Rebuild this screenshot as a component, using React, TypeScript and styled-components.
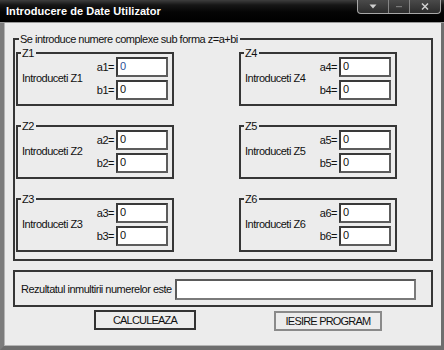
import React from "react";
import styled, { createGlobalStyle } from "styled-components";

const GlobalStyle = createGlobalStyle`
  html, body {
    margin: 0;
    padding: 0;
    background: #ececec;
  }
  body {
    font-family: "Liberation Sans", Arial, sans-serif;
  }
`;

const numbers = [1, 2, 3, 4, 5, 6];

const App: React.FC = () => {
  return (
    <>
      <GlobalStyle />
      <Window>
        <TitleBar>
          <Title>Introducere de Date Utilizator</Title>
          <Controls>
            <ControlCell $wide>
              <svg width="8" height="5" viewBox="0 0 8 5">
                <path d="M0.5 0.5 L7.5 0.5 L4 4.5 Z" fill="#cfcfcf" />
              </svg>
            </ControlCell>
            <ControlCell>
              <svg width="6" height="3" viewBox="0 0 6 3">
                <rect x="0" y="1" width="6" height="1.2" fill="#7a7a7a" />
              </svg>
            </ControlCell>
            <ControlCell $wide>
              <svg width="8" height="7" viewBox="0 0 8 7">
                <path
                  d="M1 0.5 L7 6.5 M7 0.5 L1 6.5"
                  stroke="#cfcfcf"
                  strokeWidth="1.5"
                />
              </svg>
            </ControlCell>
          </Controls>
        </TitleBar>

        <Body>
          <OuterGroup>
            <Caption $indent={4}>
              Se introduce numere complexe sub forma z=a+bi
            </Caption>
            <NumberGrid>
              {numbers.map((n) => (
                <NumberGroup key={n}>
                  <Caption $indent={3}>Z{n}</Caption>
                  <NumberContent>
                    <Prompt>Introduceti Z{n}</Prompt>
                    <Fields>
                      <FieldRow>
                        <FieldLabel>a{n}=</FieldLabel>
                        <Field defaultValue="0" readOnly $active={n === 1} />
                      </FieldRow>
                      <FieldRow>
                        <FieldLabel>b{n}=</FieldLabel>
                        <Field defaultValue="0" readOnly />
                      </FieldRow>
                    </Fields>
                  </NumberContent>
                </NumberGroup>
              ))}
            </NumberGrid>
          </OuterGroup>

          <ResultGroup>
            <Prompt>Rezultatul inmultirii numerelor este</Prompt>
            <ResultField readOnly />
          </ResultGroup>

          <ButtonRow>
            <Button $default $width={102}>
              CALCULEAZA
            </Button>
            <Button $width={108}>IESIRE PROGRAM</Button>
          </ButtonRow>
        </Body>
      </Window>
    </>
  );
};

const Window = styled.div`
  width: 444px;
  height: 350px;
  display: flex;
  flex-direction: column;
  box-sizing: border-box;
  background: #ececec;
`;

const TitleBar = styled.div`
  height: 22px;
  flex-shrink: 0;
  display: flex;
  justify-content: space-between;
  align-items: flex-start;
  background: linear-gradient(#3e3e3e 0px, #161616 5px, #050505 12px, #000 22px);
  border-bottom: 1px solid #9a9a9a;
`;

const Title = styled.div`
  padding: 5px 0 0 6px;
  font-size: 11px;
  line-height: 13px;
  font-weight: 700;
  color: #ffffff;
  letter-spacing: 0.05px;
`;

const Controls = styled.div`
  display: flex;
  height: 13px;
  margin-right: 3px;
  border: 1px solid #a8a8a8;
  border-top: none;
  border-radius: 0 0 4px 4px;
  background: linear-gradient(#4a4a4a, #2c2c2c);
  overflow: hidden;
`;

const ControlCell = styled.div<{ $wide?: boolean }>`
  width: ${({ $wide }) => ($wide ? "30px" : "20px")};
  display: flex;
  align-items: center;
  justify-content: center;
  & + & {
    border-left: 1px solid #858585;
  }
`;

const Body = styled.div`
  flex: 1;
  display: flex;
  flex-direction: column;
  padding: 15px 8px 0 9px;
  border-left: 4px solid #7c7c7c;
  border-right: 3px solid #6e6e6e;
  border-bottom: 4px solid #6e6e6e;
  box-shadow: inset 1px 0 #b4b4b4, inset 0 -1px #b4b4b4;
  font-size: 11px;
  letter-spacing: -0.5px;
  color: #111;
`;

const GroupBox = styled.div`
  display: flex;
  flex-direction: column;
  border: 2px solid #363636;
  box-sizing: border-box;
`;

const OuterGroup = styled(GroupBox)`
  height: 223px;
`;

const Caption = styled.div<{ $indent: number }>`
  width: fit-content;
  height: 12px;
  line-height: 12px;
  margin: -7px 0 -5px ${({ $indent }) => $indent}px;
  padding: 0 2px 0 1px;
  background: #ececec;
  white-space: nowrap;
`;

const NumberGrid = styled.div`
  display: grid;
  grid-template-columns: 158px 158px;
  grid-template-rows: repeat(3, 54px);
  grid-auto-flow: column;
  column-gap: 65px;
  row-gap: 19px;
  padding: 12px 0 7px 1px;
`;

const NumberGroup = styled(GroupBox)``;

const NumberContent = styled.div`
  flex: 1;
  display: flex;
  align-items: center;
  padding: 3px 4px 4px 4px;
`;

const Prompt = styled.div`
  flex: 1;
  white-space: nowrap;
  padding-bottom: 2px;
`;

const Fields = styled.div`
  display: flex;
  flex-direction: column;
  gap: 3px;
`;

const FieldRow = styled.div`
  display: flex;
  align-items: center;
  gap: 2px;
`;

const FieldLabel = styled.span`
  width: 18px;
  text-align: right;
  padding-bottom: 1px;
`;

const Field = styled.input<{ $active?: boolean }>`
  width: 52px;
  height: 20px;
  box-sizing: border-box;
  margin: 0;
  padding: 0 2px 2px;
  border: 2px solid;
  border-color: #3a3a3a #5c5c5c #5c5c5c #3a3a3a;
  background: #ffffff;
  font-family: "Liberation Sans", Arial, sans-serif;
  font-size: 11px;
  color: ${({ $active }) => ($active ? "#2c4f96" : "#111")};
  outline: none;
`;

const ResultGroup = styled(GroupBox)`
  flex-direction: row;
  align-items: center;
  margin-top: 9px;
  padding: 7px 15px 5px 6px;
`;

const ResultField = styled(Field)`
  width: 241px;
  height: 21px;
  border-color: #5a5a5a #7a7a7a #7a7a7a #5a5a5a;
`;

const ButtonRow = styled.div`
  display: flex;
  align-items: flex-start;
  gap: 78px;
  padding-left: 81px;
  margin-top: 3px;
`;

const Button = styled.button<{ $default?: boolean; $width: number }>`
  width: ${({ $width }) => $width}px;
  height: 20px;
  margin: ${({ $default }) => ($default ? "0" : "1px 0 0")};
  padding: 0 0 1px;
  box-sizing: border-box;
  background: #ececec;
  border: 2px solid ${({ $default }) => ($default ? "#333333" : "#8a8a8a")};
  font-family: "Liberation Sans", Arial, sans-serif;
  font-size: 11px;
  letter-spacing: -0.8px;
  color: #111;
`;

export default App;
